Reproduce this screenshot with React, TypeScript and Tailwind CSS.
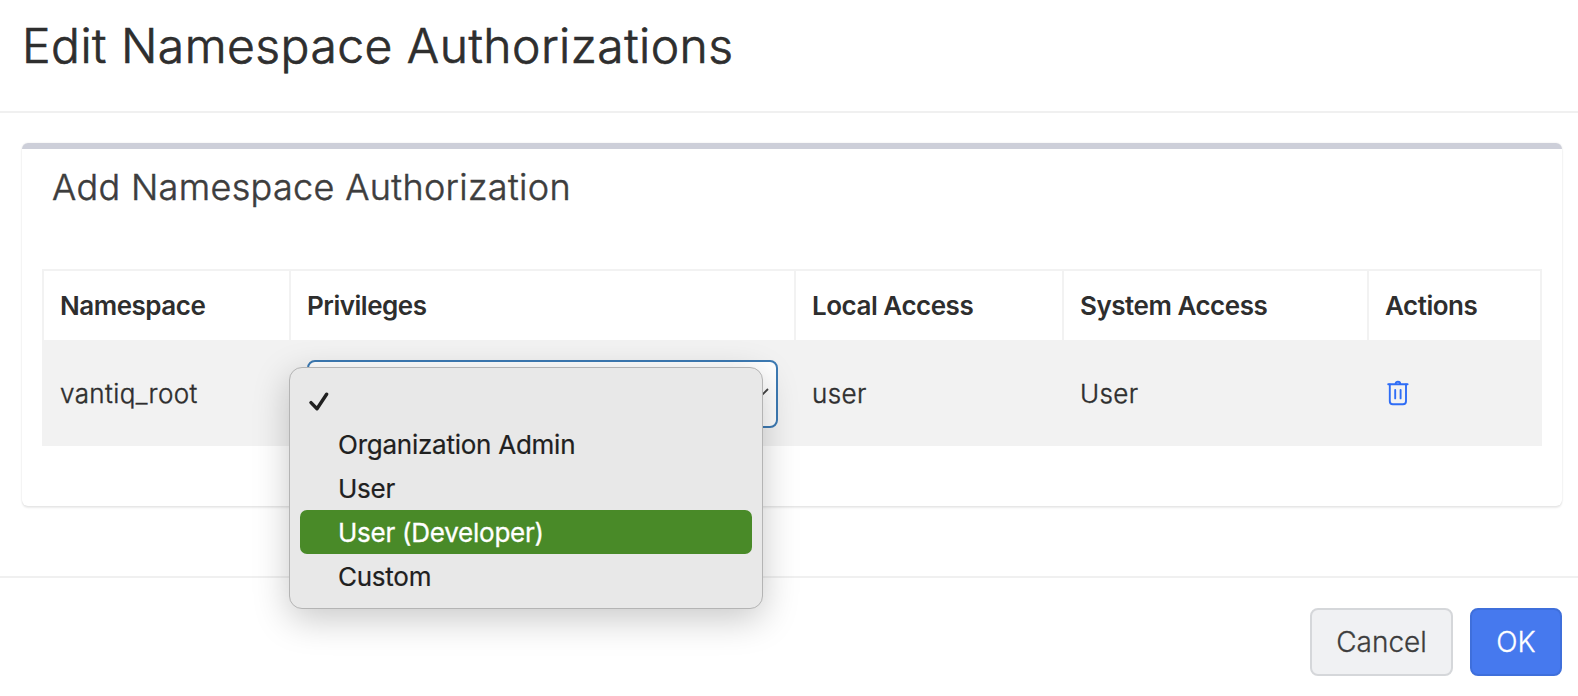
const columns = ['Namespace', 'Privileges', 'Local Access', 'System Access', 'Actions'];
const options = ['', 'Organization Admin', 'User', 'User (Developer)', 'Custom'];

function CheckIcon() {
  return (
    <svg width="20" height="20" viewBox="0 0 20 20" fill="none" stroke="#202020" strokeWidth="3.4" strokeLinecap="round" strokeLinejoin="round">
      <path d="M2 10.6 L8 16.8 L17.6 2.2" />
    </svg>
  );
}

function TrashIcon() {
  return (
    <svg width="22" height="26" viewBox="0 0 22 26" fill="none" stroke="#2f6df6" strokeWidth="1.9" strokeLinecap="round">
      <path d="M1.2 4.2 H20.6" />
      <path d="M8.6 4 C8.6 0.9 13.2 0.9 13.2 4" />
      <path d="M2.8 4.4 V21.2 C2.8 23.2 4 24.2 5.8 24.2 H16 C17.8 24.2 19 23.2 19 21.2 V4.4" />
      <path d="M8.2 10 V18.4 M13.6 10 V18.4" />
    </svg>
  );
}

function PrivilegesMenu() {
  return (
    <div className="absolute left-[-20px] top-[5px] z-10 h-[242px] w-[474px] rounded-[13px] border border-[#b4b4b4] bg-[#e8e8e8] px-[10px] py-[10px] shadow-[0_10px_36px_rgba(0,0,0,0.22)]">
      {options.map((option) => (
        <div
          key={option}
          className={
            option === 'User (Developer)'
              ? 'flex h-11 items-center rounded-[7px] bg-[#498a28] pl-[38px] text-[26px] tracking-[-0.25px] text-white [-webkit-text-stroke:0.3px]'
              : 'flex h-11 items-center pl-[38px] text-[26px] tracking-[-0.25px] text-[#202020] [-webkit-text-stroke:0.2px]'
          }
        >
          {option === '' ? (
            <span className="-ml-[29px] mt-[3px]">
              <CheckIcon />
            </span>
          ) : (
            <span>{option}</span>
          )}
        </div>
      ))}
    </div>
  );
}

export default function App() {
  return (
    <div className="flex h-[696px] w-[1578px] flex-col overflow-hidden bg-white font-['Inter',sans-serif] text-[#2e2e2e]">
      <header className="h-[113px] shrink-0 border-b-2 border-[#f0f0f0] pl-[22px] pt-[17px]">
        <h1 className="text-[48px] leading-[58px] font-light tracking-[0.48px] [-webkit-text-stroke:0.7px]">Edit Namespace Authorizations</h1>
      </header>

      <main className="h-[465px] shrink-0 border-b-2 border-[#f0f0f0] pl-[22px] pt-[30px] pr-[16px]">
        <section className="h-[363px] rounded-[6px] border-t-[6px] border-[#cdcfd9] px-5 shadow-[0_0_2px_rgba(0,0,0,0.1),0_2px_2px_rgba(0,0,0,0.08)]">
          <h2 className="h-[120px] pl-[10px] pt-[16px] text-[36px] leading-[44px] font-light tracking-[0.34px] text-[#3d3d3d] [-webkit-text-stroke:0.5px]">Add Namespace Authorization</h2>

          <div className="w-[1500px]">
            <div className="grid h-[71px] grid-cols-[247px_505px_268px_305px_173px] border-t-2 border-r-2 border-[#f2f2f2]">
              {columns.map((column) => (
                <div key={column} className="flex items-center border-l-2 border-[#f2f2f2] pl-4 text-[26px] font-semibold tracking-[-0.48px]">
                  <span>{column}</span>
                </div>
              ))}
            </div>
            <div className="grid h-[106px] grid-cols-[247px_505px_268px_305px_175px] items-center bg-[#f2f2f2] pt-[2px] text-[26px] font-light tracking-[0.4px]">
              <div className="-mt-[2px] pl-[18px] [-webkit-text-stroke:0.4px]">vantiq_root</div>
              <div className="relative ml-[18px] flex h-[68px] w-[471px] items-center justify-end rounded-[8px] border-2 border-[#3d7ab3] bg-white pr-[7px] font-normal">
                <svg width="18" height="12" viewBox="0 0 18 12" fill="none" stroke="#444444" strokeWidth="1.8">
                  <path d="M1 1 L9 9 L17 1" />
                </svg>
                <PrivilegesMenu />
              </div>
              <div className="-mt-[2px] pl-[18px] [-webkit-text-stroke:0.4px]">user</div>
              <div className="-mt-[2px] pl-[18px] [-webkit-text-stroke:0.4px]">User</div>
              <div className="-mt-[3px] pl-[20px]">
                <TrashIcon />
              </div>
            </div>
          </div>
        </section>
      </main>

      <footer className="flex justify-end gap-[17px] pr-4 pt-[30px]">
        <button className="h-[68px] w-[143px] rounded-[8px] border-2 border-[#d5d7da] bg-[#f0f1f3] text-[28px] font-light text-[#3d3d3d] [-webkit-text-stroke:0.3px]">Cancel</button>
        <button className="h-[68px] w-[92px] rounded-[8px] border-2 border-[#3f6fdb] bg-[#4679ee] text-[28px] font-light text-white [-webkit-text-stroke:0.3px]">OK</button>
      </footer>
    </div>
  );
}
